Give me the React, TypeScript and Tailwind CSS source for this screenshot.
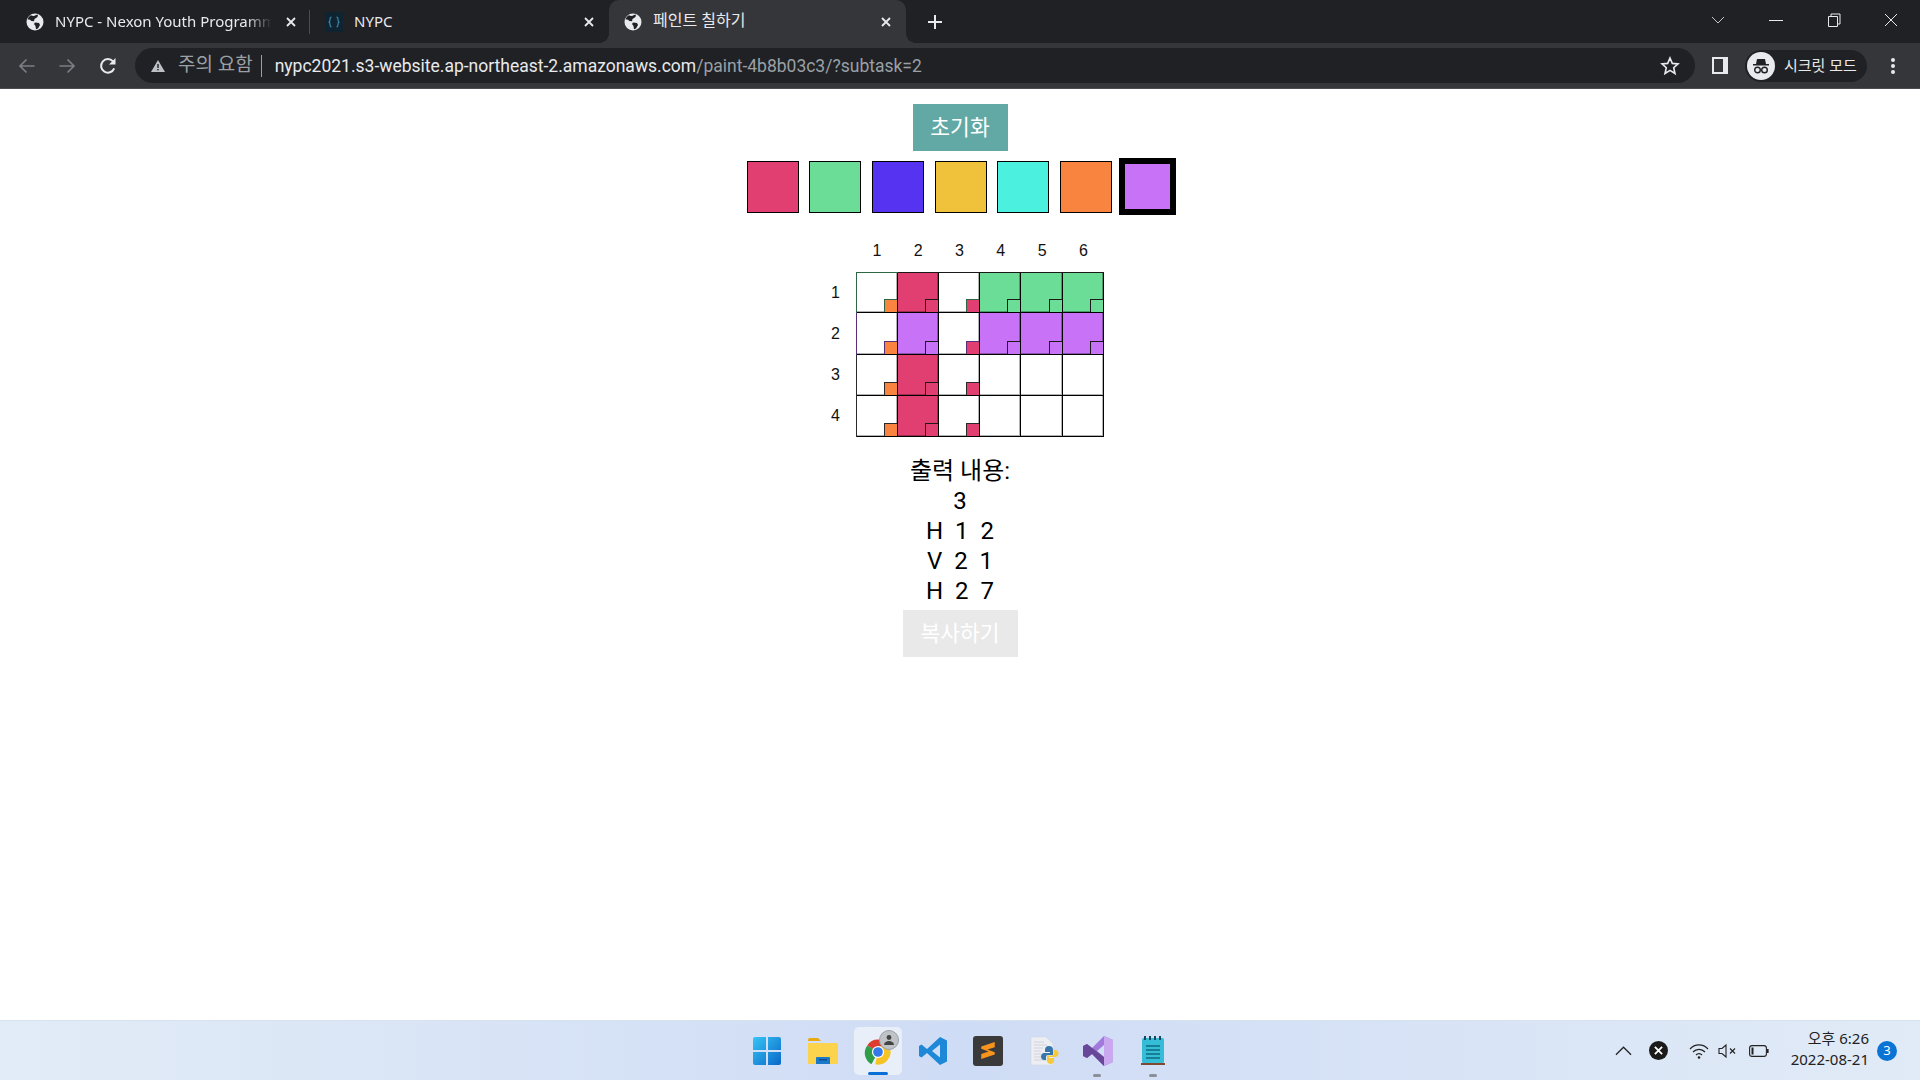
import React from "react";

const FONT = { fontFamily: '"Noto Sans","Noto Sans CJK KR",sans-serif' };

function Globe({ className = "" }: { className?: string }) {
  return (
    <svg viewBox="0 0 18 18" className={"w-[18px] h-[18px] shrink-0 " + className}>
      <circle cx="9" cy="9" r="8.5" fill="#e8eaed" />
      <path d="M5 2.2 C7 3.5 8.5 3 10 2 L12 1.4 L11.5 4 L8.5 6 L8 8.3 L5.5 8 L3.5 6.5 L1.5 6.5 C2 4.7 3.3 3 5 2.2Z" fill="#202124" />
      <path d="M9 9.5 L13 10 L14 12 L12 15.5 L10 16.2 L9.5 13 L8 11Z" fill="#202124" />
    </svg>
  );
}

function X({ className = "" }: { className?: string }) {
  return (
    <svg viewBox="0 0 12 12" className={"w-3 h-3 shrink-0 " + className}>
      <path d="M2 2 L10 10 M10 2 L2 10" stroke="#e8eaed" strokeWidth="1.8" />
    </svg>
  );
}

function Tabs() {
  return (
    <div className="h-[43px] bg-[#202124] flex items-stretch shrink-0 text-[15px] text-[#e8eaed]">
      <div className="w-[309px] flex items-center pl-[26px] pr-[12px]">
        <Globe />
        <span className="ml-[11px] mb-[1px] w-[217px] overflow-hidden whitespace-nowrap [mask-image:linear-gradient(to_right,#000_88%,transparent)]">NYPC - Nexon Youth Programming Challenge</span>
        <X className="ml-auto" />
      </div>
      <div className="w-px h-[24px] bg-[#4a4c50] self-center mt-[1px]" />
      <div className="w-[299px] flex items-center pl-[15px] pr-[14px]">
        <div className="w-[18px] h-[20px] bg-[#0f2330] flex items-center justify-center">
          <svg viewBox="0 0 14 12" className="w-[14px] h-[12px]">
            <path d="M4.5 1 C3 1 3 2 3 3.5 C3 5 2.5 6 1.5 6 C2.5 6 3 7 3 8.5 C3 10 3 11 4.5 11 M9.5 1 C11 1 11 2 11 3.5 C11 5 11.5 6 12.5 6 C11.5 6 11 7 11 8.5 C11 10 11 11 9.5 11" stroke="#3d8fb5" fill="none" strokeWidth="1.1" />
          </svg>
        </div>
        <span className="ml-[11px] mb-[1px]">NYPC</span>
        <X className="ml-auto" />
      </div>
      <div className="relative w-[297px] h-[43px] bg-[#35363a] rounded-t-[10px] flex items-center pl-[15px] pr-[14px]">
        <div className="absolute left-[-10px] bottom-0 w-[10px] h-[10px] bg-[radial-gradient(circle_at_0_0,transparent_10px,#35363a_10px)]" />
        <div className="absolute right-[-10px] bottom-0 w-[10px] h-[10px] bg-[radial-gradient(circle_at_100%_0,transparent_10px,#35363a_10px)]" />
        <Globe />
        <span className="ml-[11px] mb-[3px] text-[16px]">페인트 칠하기</span>
        <X className="ml-auto" />
      </div>
      <svg viewBox="0 0 16 16" className="w-4 h-4 self-center ml-[21px]">
        <path d="M8 1 V15 M1 8 H15" stroke="#e8eaed" strokeWidth="2" />
      </svg>
      <div className="flex-1" />
      <div className="flex items-center text-[#e8eaed]">
        <svg viewBox="0 0 14 8" className="w-[14px] h-2 mr-[44px] mb-1">
          <path d="M1 1 L7 7 L13 1" stroke="#c4c6c9" fill="none" strokeWidth="1" />
        </svg>
        <div className="w-[14px] h-px bg-[#e8eaed] mr-[44px] mb-[2px]" />
        <svg viewBox="0 0 14 14" className="w-[14px] h-[14px] mr-[43px] mb-1">
          <path d="M1.5 3.5 H10.5 V13.5 H1.5Z M4 3.5 V1 H13 V11 H10.5" stroke="#e8eaed" fill="none" strokeWidth="1" />
        </svg>
        <svg viewBox="0 0 14 14" className="w-[14px] h-[14px] mr-[22px] mb-1">
          <path d="M1 1 L13 13 M13 1 L1 13" stroke="#e8eaed" fill="none" strokeWidth="1" />
        </svg>
      </div>
    </div>
  );
}

function Toolbar() {
  return (
    <div className="h-[45px] bg-[#35363a] flex items-center shrink-0 pl-[18px] border-b border-[#4a4b4f] box-content">
      <svg viewBox="0 0 18 18" className="w-[18px] h-[18px]">
        <path d="M16.5 9 H2 M8.5 2.5 L2 9 L8.5 15.5" stroke="#7c7e82" strokeWidth="1.7" fill="none" />
      </svg>
      <svg viewBox="0 0 18 18" className="w-[18px] h-[18px] ml-[22px]">
        <path d="M1.5 9 H16 M9.5 2.5 L16 9 L9.5 15.5" stroke="#7c7e82" strokeWidth="1.7" fill="none" />
      </svg>
      <svg viewBox="0 0 18 18" className="w-[18px] h-[18px] ml-[23px]">
        <path d="M15.2 11.4 A6.8 6.8 0 1 1 14 4.4" stroke="#e8eaed" strokeWidth="2" fill="none" />
        <path d="M16.5 1 V7.5 H10Z" fill="#e8eaed" />
      </svg>
      <div className="w-[1560px] h-[35px] ml-[18px] bg-[#202124] rounded-full flex items-center pl-[15px] pr-[15px] text-[17.5px]" style={{ fontFamily: 'Roboto,"Noto Sans CJK KR",sans-serif' }}>
        <svg viewBox="0 0 16 14" className="w-4 h-[14px] shrink-0">
          <path d="M8 1 L15 13 H1Z" fill="#bdc1c6" />
          <rect x="7.3" y="5" width="1.4" height="4" fill="#202124" />
          <rect x="7.3" y="10" width="1.4" height="1.4" fill="#202124" />
        </svg>
        <span className="ml-[12px] text-[#9aa0a6] text-[19px]">주의 요함</span>
        <span className="w-px h-[22px] bg-[#9aa0a6] ml-[8px]" />
        <span className="ml-[13px] mt-[1px] text-[#e8eaed] whitespace-nowrap">nypc2021.s3-website.ap-northeast-2.amazonaws.com<span className="text-[#9aa0a6]">/paint-4b8b03c3/?subtask=2</span></span>
        <svg viewBox="0 0 20 20" className="w-[20px] h-[20px] ml-auto">
          <path d="M10 2 L12.3 7.4 L18 7.9 L13.7 11.7 L15 17.5 L10 14.4 L5 17.5 L6.3 11.7 L2 7.9 L7.7 7.4Z" stroke="#e8eaed" strokeWidth="1.6" fill="none" />
        </svg>
      </div>
      <div className="w-[16px] h-[17px] ml-[17px] border-2 border-[#e8eaed] border-r-[5px]" />
      <div className="ml-[17px] w-[122px] h-[32px] bg-[#202124] rounded-full flex items-center pl-[2px]">
        <div className="w-[28px] h-[28px] rounded-full bg-[#e8eaed] flex items-center justify-center">
          <svg viewBox="0 0 20 20" className="w-[20px] h-[20px]">
            <path d="M6 3 H14 L15 8 H18 V9.5 H2 V8 H5Z" fill="#202124" />
            <circle cx="6.5" cy="14" r="2.8" fill="none" stroke="#202124" strokeWidth="1.4" />
            <circle cx="13.5" cy="14" r="2.8" fill="none" stroke="#202124" strokeWidth="1.4" />
          </svg>
        </div>
        <span className="ml-[9px] text-[#e8eaed] text-[15px] whitespace-nowrap">시크릿 모드</span>
      </div>
      <div className="ml-[24px] flex flex-col gap-[2px]">
        <div className="w-[4px] h-[4px] rounded-full bg-[#e8eaed]" />
        <div className="w-[4px] h-[4px] rounded-full bg-[#e8eaed]" />
        <div className="w-[4px] h-[4px] rounded-full bg-[#e8eaed]" />
      </div>
    </div>
  );
}

const R = "#e13f71";
const G = "#6bdd97";
const P = "#c872f8";
const O = "#f9843f";
const swatches = [R, G, "#5633f0", "#f0c23b", "#4cf0de", O];

const rows: (string | null)[][] = [
  [null, R, null, G, G, G],
  [null, P, null, P, P, P],
  [null, R, null, null, null, null],
  [null, R, null, null, null, null],
];
const corner: (string | null)[] = [O, null, R, null, null, null];
const tint = ["#2f6644", "#5a2f7a", "#2a2a2a", "#2a2a2a"];

function Cell({ fill, row, col }: { fill: string | null; row: number; col: number }) {
  const c = fill ?? corner[col];
  const edge = fill ? "#1a1a1a" : tint[row];
  return (
    <div className="relative border-r border-b border-black shadow-[inset_-1px_-1px_0_rgba(0,0,0,0.3)]" style={{ backgroundColor: fill ?? "#fff" }}>
      {c && (
        <div className="absolute right-0 bottom-0 w-[13px] h-[13px] border-t border-l" style={{ backgroundColor: c, borderColor: edge }} />
      )}
    </div>
  );
}

function Board() {
  return (
    <div className="mt-[18px] ml-[-1px] grid grid-cols-[41.33px_repeat(6,41.33px)] grid-rows-[39px_repeat(4,41.25px)] text-[16px] text-[#111]" style={{ fontFamily: '"Liberation Sans",sans-serif' }}>
      <div />
      {[1, 2, 3, 4, 5, 6].map((n) => (
        <div key={n} className="flex items-start justify-center pt-[6px] leading-[24px]">{n}</div>
      ))}
      {rows.map((row, r) => (
        <React.Fragment key={r}>
          <div className="flex items-center justify-center">{r + 1}</div>
          {row.map((f, c) => (
            <div
              key={c}
              className={"grid " + (r === 0 ? "border-t " : "") + (c === 0 ? "border-l " : "")}
              style={{ borderColor: c === 0 ? tint[r] : r === 0 ? "#1a1a1a" : undefined }}
            >
              <Cell fill={f} row={r} col={c} />
            </div>
          ))}
        </React.Fragment>
      ))}
    </div>
  );
}

function Page() {
  return (
    <div className="flex-1 bg-white flex flex-col items-center pt-[15px]" style={{ fontFamily: 'Roboto,"Noto Sans CJK KR",sans-serif' }}>
      <button className="w-[95px] h-[47px] pt-[1px] bg-[#62a9a6] text-white text-[21.5px]">초기화</button>
      <div className="flex items-center mt-[7px] h-[57px] ml-[3px]">
        {swatches.map((c) => (
          <div key={c} className="w-[52px] h-[52px] border border-black mr-[10.6px]" style={{ backgroundColor: c }} />
        ))}
        <div className="w-[57px] h-[57px] -ml-[3px] border-[6px] border-black" style={{ backgroundColor: P }} />
      </div>
      <Board />
      <div className="mt-[19px] flex flex-col items-center text-[24px] leading-[30px] text-black">
        <div>출력 내용:</div>
        <div>3</div>
        <div className="whitespace-pre">H  1  2</div>
        <div className="whitespace-pre">V  2  1</div>
        <div className="whitespace-pre">H  2  7</div>
      </div>
      <button className="mt-[4px] w-[115px] h-[47px] pt-[1px] bg-[#e9e9e9] text-white text-[21.5px]">복사하기</button>
    </div>
  );
}

function Taskbar() {
  return (
    <div className="h-[60px] shrink-0 flex items-center border-t border-[#d8e2ee] bg-gradient-to-r from-[#e2ecf7] via-[#cfdcf5] to-[#e1ebf7]" style={FONT}>
      <div className="flex-1" />
      <div className="flex items-center h-full">
        <svg viewBox="0 0 30 30" className="w-[30px] h-[30px] ml-0">
          <defs>
            <linearGradient id="w" x1="0" y1="0" x2="1" y2="1">
              <stop offset="0" stopColor="#36c5f5" />
              <stop offset="1" stopColor="#0a67c8" />
            </linearGradient>
          </defs>
          <path d="M1 3 a2 2 0 0 1 2 -2 H14 V14 H1Z M16 1 H27 a2 2 0 0 1 2 2 V14 H16Z M1 16 H14 V29 H3 a2 2 0 0 1 -2 -2Z M16 16 H29 V27 a2 2 0 0 1 -2 2 H16Z" fill="url(#w)" />
        </svg>
        <svg viewBox="0 0 30 30" className="w-[30px] h-[30px] ml-[26px]">
          <path d="M0 4 a2 2 0 0 1 2 -2 H10 L13 5 H0Z" fill="#e9a90f" />
          <path d="M0 7 H28 a2 2 0 0 1 2 2 V27 a1 1 0 0 1 -1 1 H1 a1 1 0 0 1 -1 -1Z" fill="#fcd34d" />
          <path d="M9 21 H21 a1 1 0 0 1 1 1 V28 H8 V22 a1 1 0 0 1 1 -1Z" fill="#1c78c8" />
          <rect x="11" y="23" width="8" height="1.5" fill="#0c4f8f" />
        </svg>
        <div className="relative w-[48px] h-[48px] ml-[16px] bg-[#e9eff9] rounded-[5px] flex items-center justify-center">
          <svg viewBox="0 0 30 30" className="w-[28px] h-[28px] mt-[3px]">
            <path d="M15 15 L3.5 8 A13.5 13.5 0 0 1 27 9 H15Z" fill="#dd3d30" />
            <path d="M15 15 L8 28 A13.5 13.5 0 0 1 3.5 8Z" fill="#2f9e48" />
            <path d="M15 9 H27 A13.5 13.5 0 0 1 12 28.2 L15 15Z" fill="#f6c324" />
            <circle cx="15" cy="15" r="6.5" fill="#fff" />
            <circle cx="15" cy="15" r="5.2" fill="#3479ea" />
          </svg>
          <div className="absolute top-[3px] right-[3px] w-[20px] h-[20px] rounded-full bg-[#bfc2c6] border border-[#9da0a5] flex items-center justify-center">
            <svg viewBox="0 0 12 12" className="w-3 h-3">
              <circle cx="6" cy="3.5" r="2.4" fill="#444" />
              <path d="M1 11 a5 4 0 0 1 10 0Z" fill="#444" />
            </svg>
          </div>
          <div className="absolute bottom-0 left-[14px] w-[20px] h-[3px] rounded bg-[#0a6fd6]" />
        </div>
        <svg viewBox="0 0 30 30" className="w-[30px] h-[30px] ml-[16px]">
          <path d="M22 1 L29 4.5 V25.5 L22 29 L9 17 L3.5 21.5 L1 20 V10 L3.5 8.5 L9 13Z M22 8.5 L14 15 L22 21.5Z" fill="#1e88d8" fillRule="evenodd" />
        </svg>
        <div className="w-[30px] h-[30px] ml-[25px] rounded-[3px] bg-[#3a3a3a] flex items-center justify-center">
          <svg viewBox="0 0 16 18" className="w-[18px] h-[21px]">
            <path d="M2 5.5 L14 1.5 V6 L7.5 8.2 L14 10.5 V12.5 L2 16.5 V12 L8.5 9.8 L2 7.5Z" fill="#f7941e" />
          </svg>
        </div>
        <svg viewBox="0 0 30 30" className="w-[30px] h-[30px] ml-[26px]">
          <path d="M2 1 H17 L24 8 V29 H2Z" fill="#eceef3" stroke="#d5d8df" strokeWidth="0.6" />
          <path d="M5 6 H15 M5 9 H18 M5 12 H14 M5 15 H12 M5 18 H12 M5 21 H14 M5 24 H18" stroke="#c9ccd3" strokeWidth="0.8" />
          <path d="M20 10 a4 4 0 0 0 -4 4 V16 H21 V17 H14.5 a3.5 3.5 0 0 0 -2.5 3.5 a3.5 3.5 0 0 0 2.5 3.5 H17 V21 a2 2 0 0 1 2 -2 H24 V14 A4 4 0 0 0 20 10Z" fill="#3776ab" />
          <path d="M21 28 a4 4 0 0 0 4 -4 V22 H20 V21 H26.5 a3.5 3.5 0 0 0 3 -3.5 a3.5 3.5 0 0 0 -3 -3.5 H25 V17.5 a2 2 0 0 1 -2 2 H18 V24 A4 4 0 0 0 21 28Z" fill="#f5c93a" />
        </svg>
        <div className="relative w-[30px] h-[30px] ml-[24px]">
          <svg viewBox="0 0 30 30" className="w-[30px] h-[30px]">
            <path d="M21 0 L30 4 V26 L21 30 L9 18 L4 22 L0 20 V10 L4 8 L9 12Z M21 9 L14 15 L21 21Z" fill="#a179dc" fillRule="evenodd" />
            <path d="M21 0 L30 4 V26 L21 30Z" fill="#c9a8f0" />
            <path d="M0 10 L4 8 L21 21 V30 L9 18 L4 22 L0 20Z" fill="#68479a" />
          </svg>
          <div className="absolute -bottom-[11px] left-[10px] w-[8px] h-[3px] rounded bg-[#8a8f98]" />
        </div>
        <div className="relative w-[24px] h-[30px] ml-[28px] mr-[3px]">
          <svg viewBox="0 0 24 30" className="w-[24px] h-[30px]">
            <rect x="1" y="2" width="22" height="25" rx="1.5" fill="#35bcd6" />
            <path d="M5 10 H19 M5 14 H19 M5 18 H19 M5 22 H19" stroke="#0c6a82" strokeWidth="1.6" />
            <path d="M4 0 V4 M9 0 V4 M14 0 V4 M19 0 V4" stroke="#17485c" strokeWidth="2" />
            <rect x="0" y="27" width="24" height="2" fill="#7f4a2f" />
          </svg>
          <div className="absolute -bottom-[11px] left-[8px] w-[8px] h-[3px] rounded bg-[#8a8f98]" />
        </div>
      </div>
      <div className="flex-1 flex items-center justify-end text-[#222]">
        <svg viewBox="0 0 18 10" className="w-[17px] h-[10px]">
          <path d="M1 9 L9 1 L17 9" stroke="#222" strokeWidth="1.3" fill="none" />
        </svg>
        <div className="ml-[17px] w-[19px] h-[19px] rounded-full bg-[#1a1a1a] flex items-center justify-center">
          <svg viewBox="0 0 10 10" className="w-[9px] h-[9px]">
            <path d="M1 1 L9 9 M9 1 L1 9" stroke="#fff" strokeWidth="2" />
          </svg>
        </div>
        <svg viewBox="0 0 20 16" className="ml-[21px] w-[20px] h-[16px]">
          <path d="M1 6 A12 12 0 0 1 19 6 M4 9 A8 8 0 0 1 16 9 M7 12 A4 4 0 0 1 13 12" stroke="#222" fill="none" strokeWidth="1.2" />
          <circle cx="10" cy="14.5" r="1.3" fill="#222" />
        </svg>
        <svg viewBox="0 0 20 16" className="ml-[9px] w-[20px] h-[16px]">
          <path d="M1 5.5 H4 L8 2 V14 L4 10.5 H1Z" stroke="#222" fill="none" strokeWidth="1.1" />
          <path d="M12 5.5 L17 10.5 M17 5.5 L12 10.5" stroke="#222" strokeWidth="1.1" />
        </svg>
        <svg viewBox="0 0 20 12" className="ml-[11px] w-[20px] h-[12px]">
          <rect x="0.6" y="0.6" width="16.8" height="10.8" rx="2.5" stroke="#222" fill="none" strokeWidth="1.1" />
          <rect x="2.5" y="2.5" width="2" height="7" fill="#222" />
          <rect x="18" y="4" width="1.6" height="4" fill="#222" />
        </svg>
        <div className="ml-[21px] mb-[4px] w-[79px] flex flex-col items-end text-[15px] leading-[21px] whitespace-nowrap">
          <div>오후 6:26</div>
          <div>2022-08-21</div>
        </div>
        <div className="ml-[8px] mr-[23px] w-[20px] h-[20px] rounded-full bg-[#0a74d4] text-white text-[13px] flex items-center justify-center">3</div>
      </div>
    </div>
  );
}

export default function App() {
  return (
    <div className="w-[1920px] h-[1080px] flex flex-col overflow-hidden" style={FONT}>
      <Tabs />
      <Toolbar />
      <Page />
      <Taskbar />
    </div>
  );
}
